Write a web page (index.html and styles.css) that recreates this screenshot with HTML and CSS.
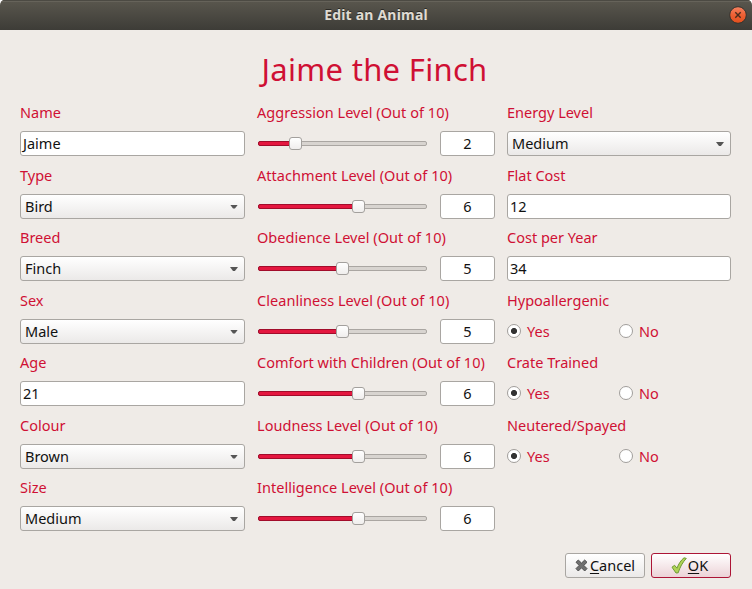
FILE: index.html
```html
<!DOCTYPE html>
<html lang="en">
<head>
<meta charset="utf-8">
<title>Edit an Animal</title>
<link rel="stylesheet" href="styles.css">
</head>
<body>
<div class="window">
  <header class="titlebar">
    <span class="titlebar-text">Edit an Animal</span>
    <svg class="close" width="18" height="18" viewBox="0 0 18 18">
      <defs><linearGradient id="cg" x1="0" y1="0" x2="0" y2="1"><stop offset="0" stop-color="#f48362"/><stop offset=".5" stop-color="#ee6034"/><stop offset="1" stop-color="#e24f1c"/></linearGradient></defs>
      <circle cx="9" cy="9" r="8.3" fill="url(#cg)" stroke="#34332e" stroke-width="1"/>
      <path d="M6.3 6.3l5.4 5.4M11.7 6.3l-5.4 5.4" stroke="#4a2c1d" stroke-width="1.4"/>
    </svg>
  </header>
  <h1 class="title">Jaime the Finch</h1>
  <main class="columns">
    <section class="column">
      <div class="row"><label>Name</label><div class="field">Jaime</div></div>
      <div class="row"><label>Type</label><div class="field select">Bird</div></div>
      <div class="row"><label>Breed</label><div class="field select">Finch</div></div>
      <div class="row"><label>Sex</label><div class="field select">Male</div></div>
      <div class="row"><label>Age</label><div class="field">21</div></div>
      <div class="row"><label>Colour</label><div class="field select">Brown</div></div>
      <div class="row"><label>Size</label><div class="field select">Medium</div></div>
    </section>
    <section class="column levels">
      <div class="row"><label>Aggression Level (Out of 10)</label><div class="level"><div class="slider" style="--v:2"><i class="fill"></i><i class="knob"></i></div><div class="field num">2</div></div></div>
      <div class="row"><label>Attachment Level (Out of 10)</label><div class="level"><div class="slider" style="--v:6"><i class="fill"></i><i class="knob"></i></div><div class="field num">6</div></div></div>
      <div class="row"><label>Obedience Level (Out of 10)</label><div class="level"><div class="slider" style="--v:5"><i class="fill"></i><i class="knob"></i></div><div class="field num">5</div></div></div>
      <div class="row"><label>Cleanliness Level (Out of 10)</label><div class="level"><div class="slider" style="--v:5"><i class="fill"></i><i class="knob"></i></div><div class="field num">5</div></div></div>
      <div class="row"><label>Comfort with Children (Out of 10)</label><div class="level"><div class="slider" style="--v:6"><i class="fill"></i><i class="knob"></i></div><div class="field num">6</div></div></div>
      <div class="row"><label>Loudness Level (Out of 10)</label><div class="level"><div class="slider" style="--v:6"><i class="fill"></i><i class="knob"></i></div><div class="field num">6</div></div></div>
      <div class="row"><label>Intelligence Level (Out of 10)</label><div class="level"><div class="slider" style="--v:6"><i class="fill"></i><i class="knob"></i></div><div class="field num">6</div></div></div>
    </section>
    <section class="column">
      <div class="row"><label>Energy Level</label><div class="field select">Medium</div></div>
      <div class="row"><label>Flat Cost</label><div class="field">12</div></div>
      <div class="row"><label>Cost per Year</label><div class="field">34</div></div>
      <div class="row"><label>Hypoallergenic</label><div class="radios"><span class="radio on">Yes</span><span class="radio">No</span></div></div>
      <div class="row"><label>Crate Trained</label><div class="radios"><span class="radio on">Yes</span><span class="radio">No</span></div></div>
      <div class="row"><label>Neutered/Spayed</label><div class="radios"><span class="radio on">Yes</span><span class="radio">No</span></div></div>
    </section>
  </main>
  <footer class="buttons">
    <div class="button cancel">
      <svg width="13" height="13" viewBox="0 0 13 13"><path d="M3.3 1L6.5 4.1 9.7 1 12 3.3 8.8 6.4 12 9.6 9.7 12 6.5 8.8 3.3 12 1 9.6 4.2 6.4 1 3.3z" fill="#707070" stroke="#505050" stroke-linejoin="round"/></svg>
      <span><u>C</u>ancel</span>
    </div>
    <div class="button ok">
      <svg width="16" height="17" viewBox="0 0 16 17"><path d="M1 10.2L3.6 8.3 6 11.2C7.5 7 10 3.2 13 .8L15.3 1.4C11.5 5.5 9 10 7.2 15.8L5 16z" fill="#b0d356" stroke="#6f9a35" stroke-linejoin="round"/></svg>
      <span><u>O</u>K</span>
    </div>
  </footer>
</div>
</body>
</html>
```
FILE: styles.css
```css
*, *::before, *::after { box-sizing: border-box; }
body {
  margin: 0;
  background: #fff;
  font: 14.5px/25px "Noto Sans", sans-serif;
  color: #111;
}
.window {
  width: 752px;
  height: 589px;
  background: #efebe7;
  border-radius: 5px 5px 0 0;
  overflow: hidden;
}
.titlebar {
  height: 30px;
  display: flex;
  align-items: center;
  justify-content: flex-end;
  position: relative;
  padding-right: 5px;
  background: linear-gradient(#5a574e, #3d3c37);
  box-shadow: inset 0 1px #4c4a43, inset 0 2px #66635a;
}
.titlebar-text {
  position: absolute;
  inset: 0;
  text-align: center;
  font-weight: bold;
  font-size: 14px;
  letter-spacing: .2px;
  line-height: 30px;
  color: #dfdbd2;
  text-shadow: 0 -1px #2b2a26;
}
.title {
  margin: 19px 0 0;
  padding-right: 3px;
  height: 51px;
  line-height: 40px;
  text-align: center;
  font-size: 31px;
  letter-spacing: .3px;
  font-weight: normal;
  color: #cf1034;
}
.columns {
  height: 439px;
  display: grid;
  grid-template-columns: 225px 238px 224px;
  column-gap: 12px;
  padding-left: 20px;
}
.row { height: 62.5px; }
label {
  display: block;
  height: 31px;
  line-height: 24px;
  white-space: nowrap;
  color: #cf1034;
}
.levels label { letter-spacing: .04px; }
.field {
  height: 25px;
  border: 1px solid #a9a6a2;
  border-radius: 3px;
  background: #fff;
  padding-left: 2px;
  line-height: 22px;
}
.select {
  display: flex;
  align-items: flex-start;
  justify-content: space-between;
  padding: 0 6px 0 4px;
  background: linear-gradient(#fff, #ebe9e8);
}
.select::after {
  content: "";
  width: 8px;
  height: 4px;
  margin-top: 10px;
  background: #555;
  clip-path: polygon(0 0, 100% 0, 62% 100%, 38% 100%);
}
.level {
  display: flex;
  align-items: center;
  justify-content: space-between;
  padding-left: 1px;
}
.num { width: 55px; padding: 0; text-align: center; }
.slider {
  position: relative;
  width: 169px;
  height: 5px;
  border: 1px solid #aaa6a2;
  border-radius: 2px;
  background: #d8d4d0;
}
.fill, .knob { position: absolute; }
.fill {
  top: -1px;
  left: -1px;
  width: calc(var(--v) * 15.6px + 4px);
  height: 5px;
  border: 1px solid #a20c2b;
  border-radius: 2px;
  background: #e4173f;
}
.knob {
  top: -5px;
  left: calc(var(--v) * 15.6px - 1px);
  width: 13px;
  height: 13px;
  border: 1px solid #a3a09d;
  border-radius: 3px;
  background: linear-gradient(#fff, #f0eeed);
}
.radios {
  display: grid;
  grid-template-columns: 112px 112px;
  color: #cf1034;
}
.radio { display: flex; gap: 6px; }
.radio::before {
  content: "";
  width: 14px;
  height: 14px;
  margin-top: 5px;
  border: 1px solid #a19e9b;
  border-radius: 50%;
  background: #fff;
}
.radio.on::before { background: radial-gradient(circle, #333 2.7px, #fff 3.4px); }
.buttons {
  display: flex;
  justify-content: flex-end;
  gap: 6px;
  padding: 14px 21px 0 0;
}
.button {
  width: 80px;
  height: 25px;
  display: flex;
  align-items: center;
  justify-content: center;
  border: 1px solid #a9a6a2;
  border-radius: 3px;
  background: linear-gradient(#fff, #ebe9e8);
  line-height: 22px;
}
.button span { height: 24px; }
.button u { text-underline-offset: 2px; }
.cancel { gap: 2px; }
.ok { padding-right: 2px; border-color: #ac1536; background: linear-gradient(#fff, #ecd3d7); }
.ok svg { margin: -1px 1px 0 -1px; }
```
